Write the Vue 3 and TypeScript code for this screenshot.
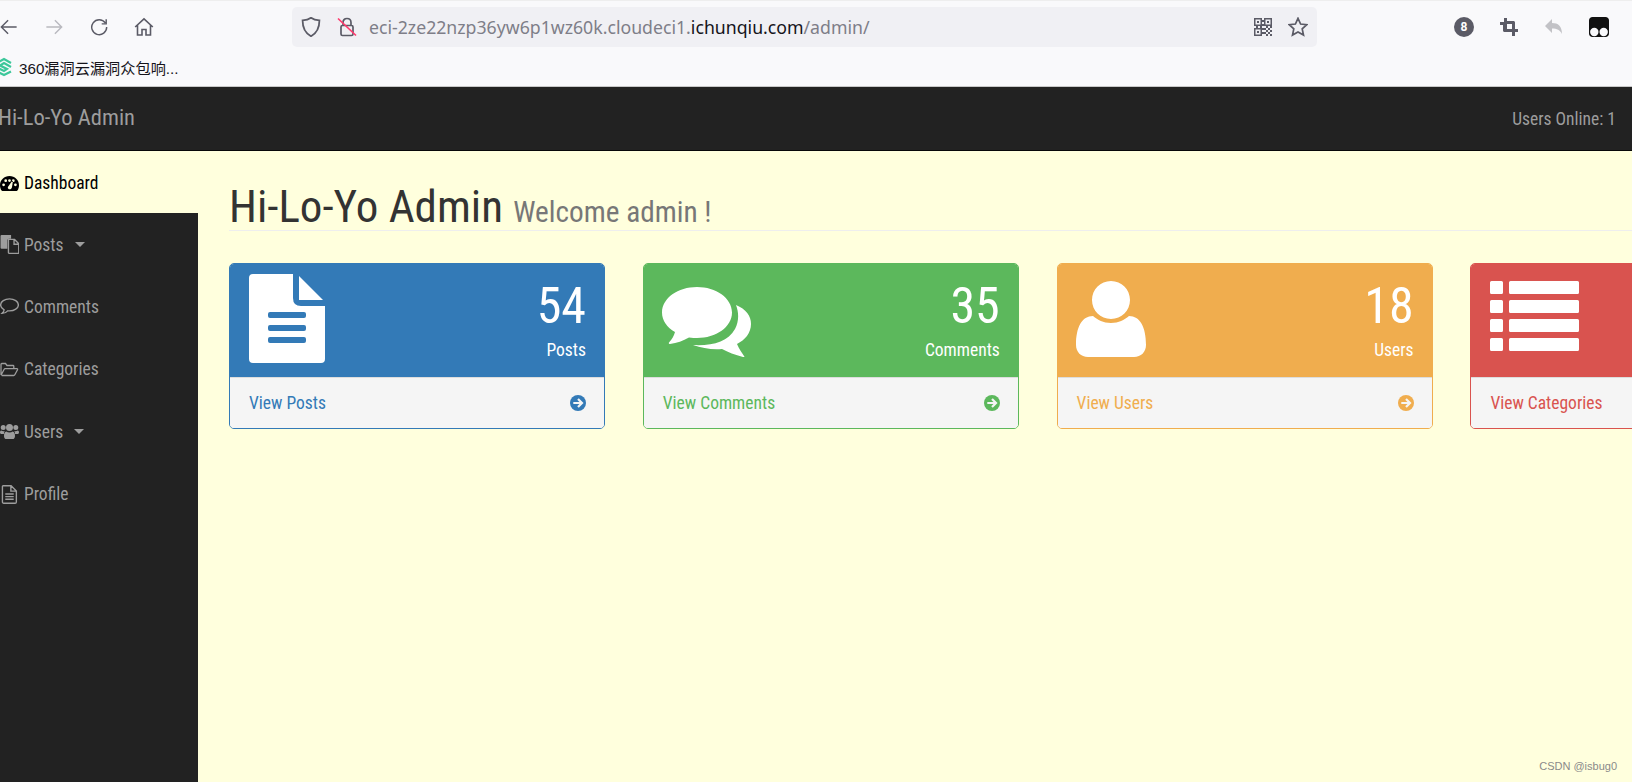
<script setup lang="ts">
interface Shape { d: string; stroke?: boolean }
interface NavItem { label: string; vb: string; shapes: Shape[]; caret?: boolean; active?: boolean }
interface Card { tone: string; count: string; label: string; link: string; vb: string; w: number; h: number; d: string; iconTop: number }

const nav: NavItem[] = [
  { label: 'Dashboard', active: true, vb: '0 0 18 14', shapes: [{ d: 'M9 0C4 0 0 3.800 0 8.600c0 1.900.5 3.600 1.500 5.100.2.200.4.300.7.300h13.600c.3 0 .5-.1.7-.3 1-1.500 1.500-3.200 1.500-5.100C18 3.800 14 0 9 0ZM3.400 9.600a1.300 1.300 0 1 1 0-2.600 1.300 1.300 0 0 1 0 2.600Zm2-4a1.300 1.300 0 1 1 0-2.600 1.300 1.300 0 0 1 0 2.600ZM9 2.900a1.300 1.300 0 1 1 0 2.600 1.300 1.300 0 0 1 0-2.600Zm1.600 9c-.7.800-2 .8-2.700.1-.7-.7-.6-1.800.1-2.400l3.600-5.200.7.300-1 6.200Zm4-2.300a1.300 1.300 0 1 1 0-2.600 1.300 1.300 0 0 1 0 2.600Zm-2-4a1.300 1.300 0 1 1 0-2.600 1.300 1.300 0 0 1 0 2.600Z' }] },
  { label: 'Posts', caret: true, vb: '-0.500 0 18 18', shapes: [{ d: 'M1 0h9v3.500H8C7.200 3.500 6.500 4.200 6.500 5v8H1a1 1 0 0 1-1-1V1a1 1 0 0 1 1-1Z' }, { d: 'M7.500 4.200h5.800l4 4V16.500c0 .5-.4 1-1 1H8.500c-.6 0-1-.5-1-1V4.500ZM12.800 4.500V8.800h4.400', stroke: true }] },
  { label: 'Comments', vb: '0 0 18 16', shapes: [{ d: 'M9 .8C4.400.8.6 3.300.6 6.500c0 1.900 1.300 3.600 3.300 4.700-.2 1.200-.8 2.300-1.900 3.300 2 0 3.900-.8 5.300-2.400.6.100 1.200.1 1.700.1 4.600 0 8.400-2.500 8.400-5.700S13.600.8 9 .8Z', stroke: true }] },
  { label: 'Categories', vb: '0 0 19 14', shapes: [{ d: 'M1 12.500V1.700C1 1.200 1.300 1 1.800 1h3.700l1.500 2h6c.5 0 .8.300.8.800V6M1 12.800 4.200 6.700c.2-.4.500-.6 1-.6h11.600c.7 0 1 .5.700 1.100l-2.700 5.100c-.2.400-.6.700-1.100.7H1.700', stroke: true }] },
  { label: 'Users', caret: true, vb: '0 0 19 17', shapes: [{ d: 'M3.200 2a2.500 2.500 0 1 1 0 5 2.500 2.500 0 0 1 0-5Zm12.600 0a2.500 2.500 0 1 1 0 5 2.500 2.500 0 0 1 0-5ZM9.500 1a3.500 3.500 0 1 1 0 7 3.500 3.500 0 0 1 0-7ZM4.800 8c-.6.800-.9 1.800-.9 3H1.500C.6 11 0 10.400 0 9.500 0 8.300.5 7.500 1.300 7.500c.8.600 2 .9 3.500.5Zm9.400 0c1.500.4 2.700.1 3.500-.5.800 0 1.300.8 1.300 2 0 .9-.6 1.500-1.500 1.500h-2.400c0-1.200-.3-2.200-.9-3ZM6.200 8.500c1.800 1.300 4.800 1.300 6.600 0 1.200.2 2.200 1.700 2.200 4.400 0 1.900-.9 3.100-2.400 3.100H6.400C4.900 16 4 14.800 4 12.900c0-2.700 1-4.200 2.200-4.400Z' }] },
  { label: 'Profile', vb: '0 0 16 18', shapes: [{ d: 'M2 .700h7.500l5 5V16c0 .7-.5 1.300-1.200 1.300H2.500c-.7 0-1.200-.6-1.200-1.300V1.500c0-.4.300-.8.700-.8ZM9.300 1v4.800h5M4 8.500h8M4 11h8M4 13.500h8', stroke: true }] },
]

const cards: Card[] = [
  { tone: 'blue', count: '54', label: 'Posts', link: 'View Posts', vb: '-1 0 77 89', w: 77, h: 89, iconTop: -4,
    d: 'M4 0H44V24Q44 32 52 32H76V85Q76 89 72 89H4Q0 89 0 85V4Q0 0 4 0ZM21 38Q19 38 19 40V42Q19 44 21 44H55Q57 44 57 42V40Q57 38 55 38ZM21 51Q19 51 19 53V55Q19 57 21 57H55Q57 57 57 55V53Q57 51 55 51ZM21 63Q19 63 19 65V67Q19 69 21 69H55Q57 69 57 67V65Q57 63 55 63ZM50 2 74 26H50Z' },
  { tone: 'green', count: '35', label: 'Comments', link: 'View Comments', vb: '0 0 89 70', w: 89, h: 70, iconTop: 9,
    d: 'M35 0C54 0 70 11 70 25.500 70 40 54 51 35 51 33 51 30 51 27 50.500 21 54 15 56 8 57 7 57 6.500 56.500 7 55.500 10 52 12 49 13 45 5 40.500 0 33.500 0 25.500 0 11 16 0 35 0ZM74 18C84 22 89 29 89 37 89 46 83 53 75 57 77 62 80 66 82 69 83 70 82 70.500 81 70 73 68 66 65 60 62 50 63 40 61 31 58 50 59 66 55 73 42 77 34 77 26 74 18Z' },
  { tone: 'orange', count: '18', label: 'Users', link: 'View Users', vb: '0 0 70 76', w: 70, h: 76, iconTop: 3,
    d: 'M35 0C45.500 0 54 8.500 54 19 54 29.500 45.500 38 35 38 24.500 38 16 29.500 16 19 16 8.500 24.500 0 35 0ZM17 35C22 39 27 42 35 42 43 42 48 39 53 35 64 35 70 46 70 64 70 71 65 76 58 76H12C5 76 0 71 0 64 0 46 6 35 17 35Z' },
  { tone: 'red', count: '', label: '', link: 'View Categories', vb: '-1 0 90 70', w: 90, h: 70, iconTop: 3,
    d: 'M1.500 0H11.500Q13 0 13 1.500V11.500Q13 13 11.500 13H1.500Q0 13 0 11.500V1.500Q0 0 1.500 0ZM20.500 0H87.500Q89 0 89 1.500V11.500Q89 13 87.500 13H20.500Q19 13 19 11.500V1.500Q19 0 20.500 0ZM1.500 19H11.500Q13 19 13 20.500V30.500Q13 32 11.500 32H1.500Q0 32 0 30.500V20.500Q0 19 1.500 19ZM20.500 19H87.500Q89 19 89 20.500V30.500Q89 32 87.500 32H20.500Q19 32 19 30.500V20.500Q19 19 20.500 19ZM1.500 38H11.500Q13 38 13 39.500V49.500Q13 51 11.500 51H1.500Q0 51 0 49.500V39.500Q0 38 1.500 38ZM20.500 38H87.500Q89 38 89 39.500V49.500Q89 51 87.500 51H20.500Q19 51 19 49.500V39.500Q19 38 20.500 38ZM1.500 57H11.500Q13 57 13 58.500V68.500Q13 70 11.500 70H1.500Q0 70 0 68.500V58.500Q0 57 1.500 57ZM20.500 57H87.500Q89 57 89 58.500V68.500Q89 70 87.500 70H20.500Q19 70 19 68.500V58.500Q19 57 20.500 57Z' },
]
</script>

<template>
  <div class="page">
    <header class="browser">
      <div class="toolbar">
        <div class="controls">
          <svg class="tb" viewBox="0 0 20 20"><path d="M18.500 10H1.500M9 2.500 1.500 10 9 17.500" /></svg>
          <svg class="tb dim" viewBox="0 0 20 20"><path d="M1.500 10H18.500M11 2.500 18.500 10 11 17.500" /></svg>
          <svg class="tb" viewBox="0 0 20 20"><path d="M17 5.500A8.300 8.300 0 1 0 18.500 10M18 1.500V6.500H13" /></svg>
          <svg class="tb home" viewBox="0 0 20 20"><path d="M1.200 10 10 1.800 18.800 10M3.500 8V18H8V12.500H12V18H16.500V8" /></svg>
        </div>
        <div class="address">
          <svg class="ad shield" viewBox="1 0.500 18 19"><path d="M10 1.200C12.500 3 15 3.500 18 3.700 18 11 15.500 16 10 18.800 4.500 16 2 11 2 3.700 5 3.500 7.500 3 10 1.200Z" /></svg>
          <svg class="ad lock" viewBox="0 0 20 20"><path d="M6 8.500V5.500C6 3 7.800 1.500 10 1.500S14 3 14 5.500V8.500M5.500 8.500H14.500C15.500 8.500 16 9 16 10V17C16 18 15.500 18.500 14.500 18.500H5.500C4.500 18.500 4 18 4 17V10C4 9 4.500 8.500 5.500 8.500Z" /><path class="slash" d="M1 1.500 19 18.500" /></svg>
          <span class="url">eci-2ze22nzp36yw6p1wz60k.cloudeci1.<b>ichunqiu.com</b>/admin/</span>
          <svg class="qr" viewBox="0 0 18 18"><path d="M0 0h8v8H0ZM1.500 1.500v5h5v-5ZM3 3h2v2H3ZM10 0h8v8h-8ZM11.500 1.500v5h5v-5ZM13 3h2v2h-2ZM0 10h8v8H0ZM1.500 11.500v5h5v-5ZM3 13h2v2H3ZM10 10h2v2h-2ZM14 10h2v2h-2ZM12 12h2v2h-2ZM16 12h2v2h-2ZM10 14h2v2h-2ZM14 14h2v2h-2ZM12 16h2v2h-2ZM16 16h2v2h-2ZM8 2h2v2H8ZM8 6h2v2H8ZM2 8h2v2H2ZM6 8h2v2H6ZM12 8h2v2h-2ZM16 8h2v2h-2ZM8 10h2v2H8ZM8 14h2v2H8Z" fill-rule="evenodd" /></svg>
          <svg class="ad star" viewBox="0 0 20 20"><path d="M10 1.300 12.600 7 18.800 7.700 14.200 11.900 15.500 18 10 14.900 4.500 18 5.800 11.900 1.200 7.700 7.400 7Z" /></svg>
        </div>
        <div class="extensions">
          <span class="badge">8</span>
          <svg class="solid crop" viewBox="0 0 18 18"><path d="M4 0h3v3h6.500C14.300 3 15 3.700 15 4.500V11h3v3h-3v4h-3v-4H4.500C3.700 14 3 13.300 3 12.500V7H0V4h4ZM7 6v5h5V6Z" fill-rule="evenodd" /></svg>
          <svg class="solid undo" viewBox="0 0 18 18"><path d="M7 1v4c6 0 10 3 10 11-2-4-5-5.500-10-5.500V15L0 8Z" /></svg>
          <svg class="solid monkey" viewBox="0 0 20 20"><path d="M3.500 0h13C18.500 0 20 1.500 20 3.500V16.500C20 18.500 18.500 20 16.500 20H3.500C1.500 20 0 18.500 0 16.500V3.500C0 1.500 1.500 0 3.500 0ZM5.300 10.800a4.200 4.200 0 1 0 0 8.400 4.200 4.200 0 0 0 0-8.400ZM14.700 10.800a4.200 4.200 0 1 0 0 8.400 4.200 4.200 0 0 0 0-8.400Z" fill-rule="evenodd" /></svg>
        </div>
      </div>
      <div class="bookmarks">
        <svg class="bm" viewBox="0 0 16 20"><path d="M1 6 8 2 15 6M15 10 8 6 4 8.500 11 12 8 14 1 10.500M1 14.500 8 18 15 14.500" /></svg>
        <span>360漏洞云漏洞众包响...</span>
      </div>
    </header>

    <nav class="navbar">
      <span class="brand">Hi-Lo-Yo Admin</span>
      <span class="online">Users Online: 1</span>
    </nav>

    <div class="workspace">
      <aside class="sidebar">
        <a v-for="item in nav" :key="item.label" class="nav-item" :class="{ active: item.active }">
          <svg class="nav-icon" :viewBox="item.vb">
            <path v-for="s in item.shapes" :key="s.d" :d="s.d" :class="s.stroke ? 'line' : 'fill'" fill-rule="evenodd" />
          </svg>
          <span>{{ item.label }}</span>
          <i v-if="item.caret" class="caret"></i>
        </a>
      </aside>

      <main class="content">
        <h1 class="title">Hi-Lo-Yo Admin <small>Welcome admin !</small></h1>
        <section class="cards">
          <article v-for="c in cards" :key="c.link" class="card" :class="c.tone">
            <div class="card-top">
              <svg class="card-icon" :viewBox="c.vb" :width="c.w" :height="c.h" :style="{ marginTop: c.iconTop + 'px' }">
                <path :d="c.d" fill="#fff" fill-rule="evenodd" />
              </svg>
              <div v-if="c.count" class="figures">
                <div class="count">{{ c.count }}</div>
                <div class="label">{{ c.label }}</div>
              </div>
            </div>
            <div class="card-foot">
              <span>{{ c.link }}</span>
              <svg class="go" viewBox="0 0 16 16">
                <circle cx="8" cy="8" r="8" class="disc" />
                <path d="M3.300 8H11.800M8 4 12 8 8 12" class="arrow" />
              </svg>
            </div>
          </article>
        </section>
      </main>
    </div>

    <span class="watermark">CSDN @isbug0</span>
  </div>
</template>

<style>
html, body { margin: 0; padding: 0; }
</style>

<style scoped>
.page {
  position: relative;
  width: 1632px;
  height: 782px;
  overflow: hidden;
  display: flex;
  flex-direction: column;
  background: #ffffdd;
  font-family: Roboto, "Liberation Sans", sans-serif;
  font-stretch: 75%;
  font-size: 17.5px;
}
.browser {
  height: 87px;
  flex: none;
  box-sizing: border-box;
  background: #f9f9fb;
  border-top: 1px solid #eeeeee;
  border-bottom: 1px solid #c8c8c8;
  font-stretch: 100%;
}
.toolbar { height: 51px; display: flex; align-items: center; }
.controls { width: 292px; flex: none; display: flex; align-items: center; gap: 27px; }
.tb { width: 18px; height: 18px; flex: none; fill: none; stroke: #5b5b66; stroke-width: 1.6; }
.tb.dim { stroke: #b9b9bf; }
.tb.home { width: 20px; height: 20px; margin-left: -1px; }
.address {
  width: 1025px;
  height: 40px;
  flex: none;
  box-sizing: border-box;
  background: #f0f0f4;
  border-radius: 5px;
  display: flex;
  align-items: center;
  padding: 0 9px 0 9px;
}
.ad { width: 20px; height: 20px; flex: none; fill: none; stroke: #5b5b66; stroke-width: 1.700; }
.lock { margin-left: 16px; }
.lock .slash { stroke: #ff3a6e; }
.url { margin-left: 12px; flex: 1; color: #7e7e88; font-family: "Noto Sans", sans-serif; font-size: 17.700px; white-space: nowrap; }
.url b { font-weight: 400; color: #15141a; }
.qr { width: 18px; height: 18px; flex: none; fill: #5b5b66; margin-right: 16px; }
.extensions { display: flex; align-items: center; margin-left: 137px; }
.badge {
  width: 20px; height: 20px; border-radius: 50%;
  background: #5b5b66; color: #fff;
  font-size: 12px; font-weight: 700; line-height: 20px; text-align: center;
}
.solid { width: 18px; height: 18px; flex: none; }
.crop { fill: #5b5b66; margin-left: 26px; }
.undo { fill: #c2c2c6; margin-left: 27px; }
.monkey { width: 20px; height: 20px; fill: #111; margin-left: 26px; }
.bookmarks { height: 30px; display: flex; align-items: center; gap: 7px; color: #15141a; font-family: "Liberation Sans", "Noto Sans CJK SC", sans-serif; font-size: 15.200px; white-space: nowrap; }
.bm { width: 16px; height: 20px; flex: none; margin-left: -4px; fill: none; stroke: #3cc79a; stroke-width: 2.200; }

.navbar {
  height: 64px;
  flex: none;
  box-sizing: border-box;
  background: #222222;
  border-bottom: 1px solid #080808;
  display: flex;
  align-items: center;
  justify-content: space-between;
  color: #9d9d9d;
  padding: 0 16px 0 0;
}
.brand { font-size: 22.500px; margin: -3px 0 0 -2px; }

.workspace { flex: 1; min-height: 0; display: flex; }
.sidebar { width: 198px; flex: none; background: #222222; display: flex; flex-direction: column; }
.nav-item {
  height: 62.400px;
  flex: none;
  box-sizing: border-box;
  display: flex;
  align-items: center;
  color: #9d9d9d;
}
.nav-item.active { color: #000; background: #ffffdd; padding-top: 2px; }
.nav-icon { width: 19px; height: 19px; flex: none; margin-right: 5px; }
.nav-icon .fill { fill: currentColor; }
.nav-icon .line { fill: none; stroke: currentColor; stroke-width: 1.300; }
.caret {
  width: 0; height: 0; margin-left: 11px;
  border-left: 5.500px solid transparent;
  border-right: 5.500px solid transparent;
  border-top: 5.500px solid currentColor;
}

.content { flex: 1; min-width: 0; padding-left: 31px; overflow: hidden; }
.title {
  margin: 33px 0 32px;
  padding-bottom: 1px;
  border-bottom: 1px solid #eeeeee;
  font-size: 45px;
  font-weight: 400;
  line-height: 45px;
  color: #333333;
  white-space: nowrap;
}
.title small { font-size: 29.250px; line-height: 1; color: #777777; }
.cards { display: flex; gap: 37.800px; }
.card {
  width: 376px;
  height: 166px;
  flex: none;
  box-sizing: border-box;
  border: 1px solid var(--tone);
  border-radius: 5px;
  overflow: hidden;
  display: flex;
  flex-direction: column;
  color: var(--tone);
}
.blue { --tone: #337ab7; }
.green { --tone: #5cb85c; }
.orange { --tone: #f0ad4e; }
.red { --tone: #d9534f; }
.card-top {
  height: 114px;
  flex: none;
  box-sizing: border-box;
  background: var(--tone);
  border-bottom: 1px solid #dddddd;
  padding: 14px 18px;
  display: flex;
  justify-content: space-between;
  color: #fff;
}
.card-icon { flex: none; display: block; }
.figures { text-align: right; }
.count { font-size: 50px; line-height: 55px; margin-top: 1px; }
.label { line-height: 25px; margin-top: 4px; }
.card-foot {
  flex: 1;
  background: #f5f5f5;
  display: flex;
  align-items: center;
  justify-content: space-between;
  padding: 0 18px 0 19px;
}
.go { width: 16px; height: 16px; flex: none; }
.disc { fill: currentColor; }
.arrow { fill: none; stroke: #f5f5f5; stroke-width: 2.200; }
.watermark {
  position: absolute;
  right: 15px;
  bottom: 10px;
  color: #8a8a8a;
  font-family: "Liberation Sans", sans-serif;
  font-stretch: 100%;
  font-size: 11px;
}
</style>
